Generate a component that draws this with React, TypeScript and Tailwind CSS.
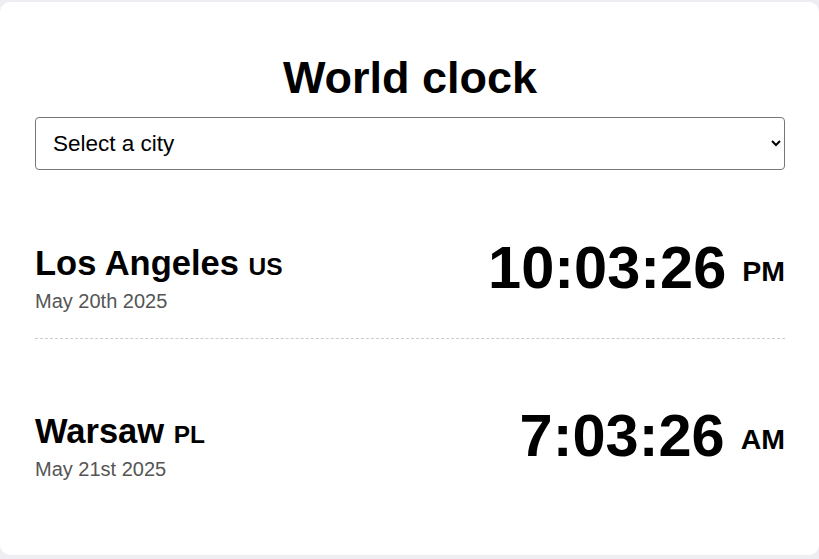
import React from "react";

type City = { name: string; code: string; date: string; time: string; ampm: string };

const cities: City[] = [
  { name: "Los Angeles", code: "US", date: "May 20th 2025", time: "10:03:26", ampm: "PM" },
  { name: "Warsaw", code: "PL", date: "May 21st 2025", time: "7:03:26", ampm: "AM" },
];

export default function App() {
  return (
    <div
      className="min-h-screen bg-[#ededf2] pt-[2px]"
      style={{ fontFamily: '"Liberation Sans", Arial, sans-serif' }}
    >
      <div className="bg-white rounded-[10px] h-[553px] pl-[35px] pr-[34px] pt-[53px] text-black">
        <h1 className="text-[45px] font-bold leading-none text-center mb-[17px]">World clock</h1>
        <select className="w-full h-[53px] border border-[#767676] rounded-[4px] bg-white pl-[13px] pr-[4px] text-[22.5px] text-black">
          <option>Select a city</option>
        </select>
        {cities.map((c, i) => (
          <div
            key={c.name}
            className={
              i < cities.length - 1
                ? "flex justify-between items-start pt-[67.5px] pb-[27px] border-b border-dashed border-[#cccccc]"
                : "flex justify-between items-start pt-[67.5px] pb-[27px]"
            }
          >
            <div className="mt-[8px]">
              <div className="text-[34.5px] font-bold leading-none">
                {c.name} <span className="text-[24.5px]">{c.code}</span>
              </div>
              <div className="mt-[10.5px] text-[20px] leading-none text-[#555555]">{c.date}</div>
            </div>
            <div className="flex items-start">
              <div className="text-[59.5px] font-bold leading-none">{c.time}</div>
              <div className="text-[28.5px] font-bold leading-none ml-4 mt-[19px]">{c.ampm}</div>
            </div>
          </div>
        ))}
      </div>
    </div>
  );
}
